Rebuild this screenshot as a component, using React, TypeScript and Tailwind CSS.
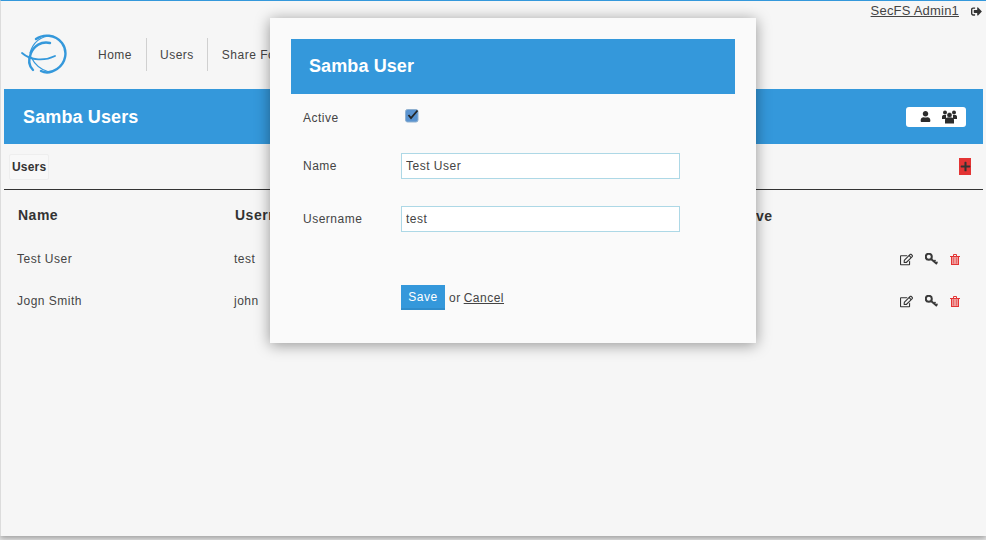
import { FaPlus, FaRegEdit, FaSignOutAlt, FaUser } from 'react-icons/fa'

const users = [
  { name: 'Test User', username: 'test' },
  { name: 'Jogn Smith', username: 'john' },
]

function Logo() {
  return (
    <svg width="46" height="42" viewBox="0 0 46 42" fill="none" stroke="#3498db" strokeLinecap="round">
      <path d="M15 6C22 1 34 1 41 10C47 18 45 30 36 36C30 40 24 40 20 38" strokeWidth="2.400" />
      <path d="M29 10C20 8 13 13 10 20C7 27 8 33 12 37" strokeWidth="2.400" />
      <path d="M30 3C20 3 12 9 9 20" strokeWidth="1.200" />
      <path d="M1 20C10 28 24 28 34 23" strokeWidth="1.800" />
      <path d="M10 24C14 32 20 37 28 39" strokeWidth="1.200" />
    </svg>
  )
}

function Checkbox() {
  return (
    <svg width="15" height="15" viewBox="0 0 15 15">
      <rect x="0.500" y="1.500" width="12.500" height="12.500" rx="2" fill="#5a93cf" stroke="#8fb0d0" />
      <path d="M3.500 7L6 10L12.500 2.500" fill="none" stroke="#262626" strokeWidth="1.800" />
    </svg>
  )
}

function GroupIcon() {
  return (
    <svg width="15" height="14" viewBox="0 0 15 14" fill="#2c2c2c">
      <circle cx="3" cy="2.500" r="2" />
      <circle cx="12" cy="2.500" r="2" />
      <path d="M0 6.500C0 5.500 1 5 2 5H4V9H0Z" />
      <path d="M15 6.500C15 5.500 14 5 13 5H11V9H15Z" />
      <circle cx="7.500" cy="5" r="2.600" stroke="#f6f6f6" strokeWidth="0.500" />
      <path d="M3 10C3 8.500 4 7.500 5.500 7.500H9.500C11 7.500 12 8.500 12 10V13.500H3Z" />
    </svg>
  )
}

function KeyIcon() {
  return (
    <svg width="13" height="12" viewBox="0 0 13 12" fill="none" stroke="#3a3a3a">
      <circle cx="3.800" cy="3.800" r="3" strokeWidth="2" />
      <path d="M6 6L12 11" strokeWidth="2" />
      <path d="M9 8.500L10.500 7M11 10.200L12.500 8.700" strokeWidth="1.500" />
    </svg>
  )
}

function TrashIcon() {
  return (
    <svg width="10" height="11" viewBox="0 0 10 11" fill="none">
      <rect x="1.500" y="2.500" width="7" height="8" fill="#ef9a9a" stroke="#e33434" />
      <path d="M0 2.500H10M3.500 2V0.500H6.500V2" stroke="#e33434" />
      <path d="M3.500 3.500V9.500M6.500 3.500V9.500" stroke="#e33434" strokeOpacity="0.500" />
    </svg>
  )
}

export default function App() {
  return (
    <div className="relative h-[540px] w-[986px] overflow-hidden bg-[#e8e8e8] font-['Liberation_Sans',Arial,sans-serif] text-xs tracking-[0.5px] text-[#444444]">
      <div className="h-[536px] border-t border-l border-t-[#3498db] border-l-[#dcdcdc] bg-[#f6f6f6] shadow-[0_2px_6px_rgba(0,0,0,0.35)]">
        <div className="flex h-[18px] items-center justify-end pt-[2px] pr-[4px]">
          <a className="text-[13px] tracking-[0.2px] underline">SecFS Admin1</a>
          <FaSignOutAlt className="ml-3 text-[11px] text-[#333]" />
        </div>

        <div className="flex h-[70px] items-center pl-[20px]">
          <Logo />
          <nav className="ml-[7px] flex h-[33px] items-center">
            <span className="h-[33px] border-r border-[#d0d0d0] pr-[14px] pl-[24px] leading-[35px]">Home</span>
            <span className="h-[33px] border-r border-[#d0d0d0] px-[13px] leading-[35px]">Users</span>
            <span className="h-[33px] px-[14px] leading-[35px]">Share Folders</span>
          </nav>
        </div>

        <div className="mx-[3px] flex h-[55px] items-center justify-between bg-[#3498db] pr-[17px] pl-[19px]">
          <h1 className="text-lg font-bold tracking-[0.13px] text-white">Samba Users</h1>
          <div className="flex h-5 w-[60px] items-center justify-center gap-[11px] rounded-[3px] bg-white pl-[5px] text-[#2c2c2c]">
            <FaUser className="text-[11px]" />
            <GroupIcon />
          </div>
        </div>

        <div className="mx-[3px] flex h-[46px] items-center justify-between border-b border-[#333] pr-3 pl-[5px]">
          <span className="rounded-[2px] border border-[#eeeeee] bg-[#f8f8f8] px-[2px] py-[4px] font-bold tracking-[0.2px] text-[#333]">
            Users
          </span>
          <span className="flex h-[17px] w-3 items-center justify-center bg-[#e33434] text-[#333]">
            <FaPlus className="text-[11px]" />
          </span>
        </div>

        <div className="mx-[3px]">
          <div className="grid h-[48px] grid-cols-[217px_1fr] items-center pt-[2px] pl-[14px] text-sm font-bold text-[#333]">
            <span>Name</span>
            <span>Username</span>
          </div>
          {users.map(u => (
            <div key={u.name} className="grid h-[42px] grid-cols-[217px_1fr_auto] items-center pr-[23px] pl-[13px]">
              <span>{u.name}</span>
              <span>{u.username}</span>
              <span className="flex items-center gap-3">
                <FaRegEdit className="text-[13px] text-[#333]" />
                <KeyIcon />
                <TrashIcon />
              </span>
            </div>
          ))}
        </div>
      </div>

      <span className="absolute top-[206px] left-[756px] text-sm font-bold text-[#333]">ve</span>

      <div className="absolute top-[18px] left-[270px] h-[325px] w-[486px] bg-[#fafafa] px-[21px] pt-[21px] shadow-[0_2px_14px_rgba(0,0,0,0.4)]">
        <h2 className="flex h-[55px] items-center bg-[#3498db] pb-[2px] pl-[18px] text-lg font-bold tracking-[0.1px] text-white">
          Samba User
        </h2>
        <div className="mt-[11px] grid grid-cols-[98px_1fr] items-center pl-3">
          <span className="h-[25px] pt-[5px]">Active</span>
          <span className="flex h-[25px] items-start pt-[3px] pl-[4px]">
            <Checkbox />
          </span>
        </div>
        <div className="mt-[23px] grid grid-cols-[98px_279px] items-center pl-3">
          <label>Name</label>
          <input
            readOnly
            value="Test User"
            className="h-[26px] w-full border border-[#add8e6] bg-white px-1 text-xs tracking-[0.5px] text-[#444444] outline-none"
          />
        </div>
        <div className="mt-[27px] grid grid-cols-[98px_279px] items-center pl-3">
          <label>Username</label>
          <input
            readOnly
            value="test"
            className="h-[26px] w-full border border-[#add8e6] bg-white px-1 text-xs tracking-[0.5px] text-[#444444] outline-none"
          />
        </div>
        <div className="mt-[53px] flex items-center gap-1 pl-[110px]">
          <button className="h-[25px] w-11 border-b-2 border-[#2f8ccb] bg-[#3498db] text-center text-xs text-white">
            Save
          </button>
          <span>or</span>
          <a className="-ml-[1px] underline">Cancel</a>
        </div>
      </div>
    </div>
  )
}
